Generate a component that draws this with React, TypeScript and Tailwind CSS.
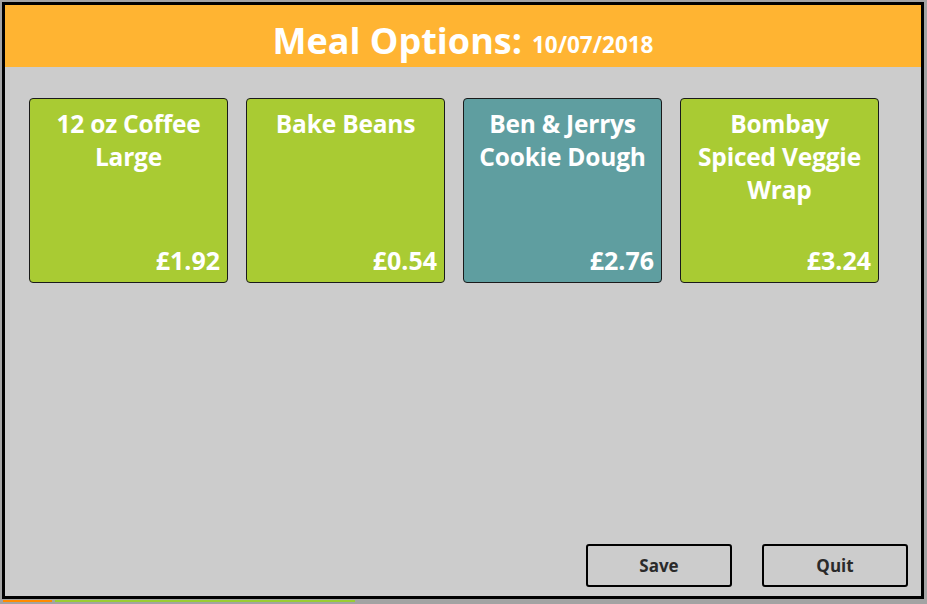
import React from "react";

const items = [
  { name: "12 oz Coffee Large", lines: ["12 oz Coffee", "Large"], price: "£1.92", bg: "bg-[#a9cb33]" },
  { name: "Bake Beans", lines: ["Bake Beans"], price: "£0.54", bg: "bg-[#a9cb33]" },
  { name: "Ben & Jerrys Cookie Dough", lines: ["Ben & Jerrys", "Cookie Dough"], price: "£2.76", bg: "bg-[#5f9ea0]" },
  { name: "Bombay Spiced Veggie Wrap", lines: ["Bombay", "Spiced Veggie", "Wrap"], price: "£3.24", bg: "bg-[#a9cb33]" },
];

export default function App() {
  return (
    <div
      className="relative w-[927px] h-[604px] bg-[#a3a3a3] overflow-hidden"
      style={{ fontFamily: '"Open Sans", "Noto Sans", sans-serif' }}
    >
      <div className="absolute left-[3px] top-[600px] h-[2px] w-[49px] bg-[#ff8a00]" />
      <div className="absolute left-[55px] top-[600px] h-[2px] w-[300px] bg-[#9acd32]" />
      <div className="ml-[2px] mt-[2px] w-[922px] h-[597px] border-[3px] border-black flex flex-col bg-[#cccccc]">
        <div className="h-[62px] bg-[#ffb432] flex items-center justify-center text-white font-bold pt-[9px]">
          <span className="text-[36px] leading-none">Meal Options:</span>
          <span className="ml-[10px] mt-[9px] text-[22.5px] leading-none">10/07/2018</span>
        </div>
        <div className="flex gap-[18px] pl-[24px] pt-[31px]">
          {items.map((it) => (
            <div
              key={it.name}
              className={`${it.bg} w-[199px] h-[185px] border border-[#1a1a1a] rounded-[4px] flex flex-col text-white font-bold`}
            >
              <div className="pt-[8px] text-center text-[24.5px] leading-[33px] tracking-[-0.2px]">
                {it.lines.map((l) => (
                  <div key={l}>{l}</div>
                ))}
              </div>
              <div className="mt-auto pr-[7px] pb-[6px] text-right text-[25px] leading-[32px]">{it.price}</div>
            </div>
          ))}
        </div>
        <div className="flex-1" />
        <div className="flex justify-end gap-[30px] pr-[13px] pb-[9px]">
          <button className="w-[146px] h-[43px] border-2 border-black rounded-[3px] text-[17px] font-bold text-[#2a2a2a] bg-[#cccccc]">
            Save
          </button>
          <button className="w-[146px] h-[43px] border-2 border-black rounded-[3px] text-[17px] font-bold text-[#2a2a2a] bg-[#cccccc]">
            Quit
          </button>
        </div>
      </div>
    </div>
  );
}
